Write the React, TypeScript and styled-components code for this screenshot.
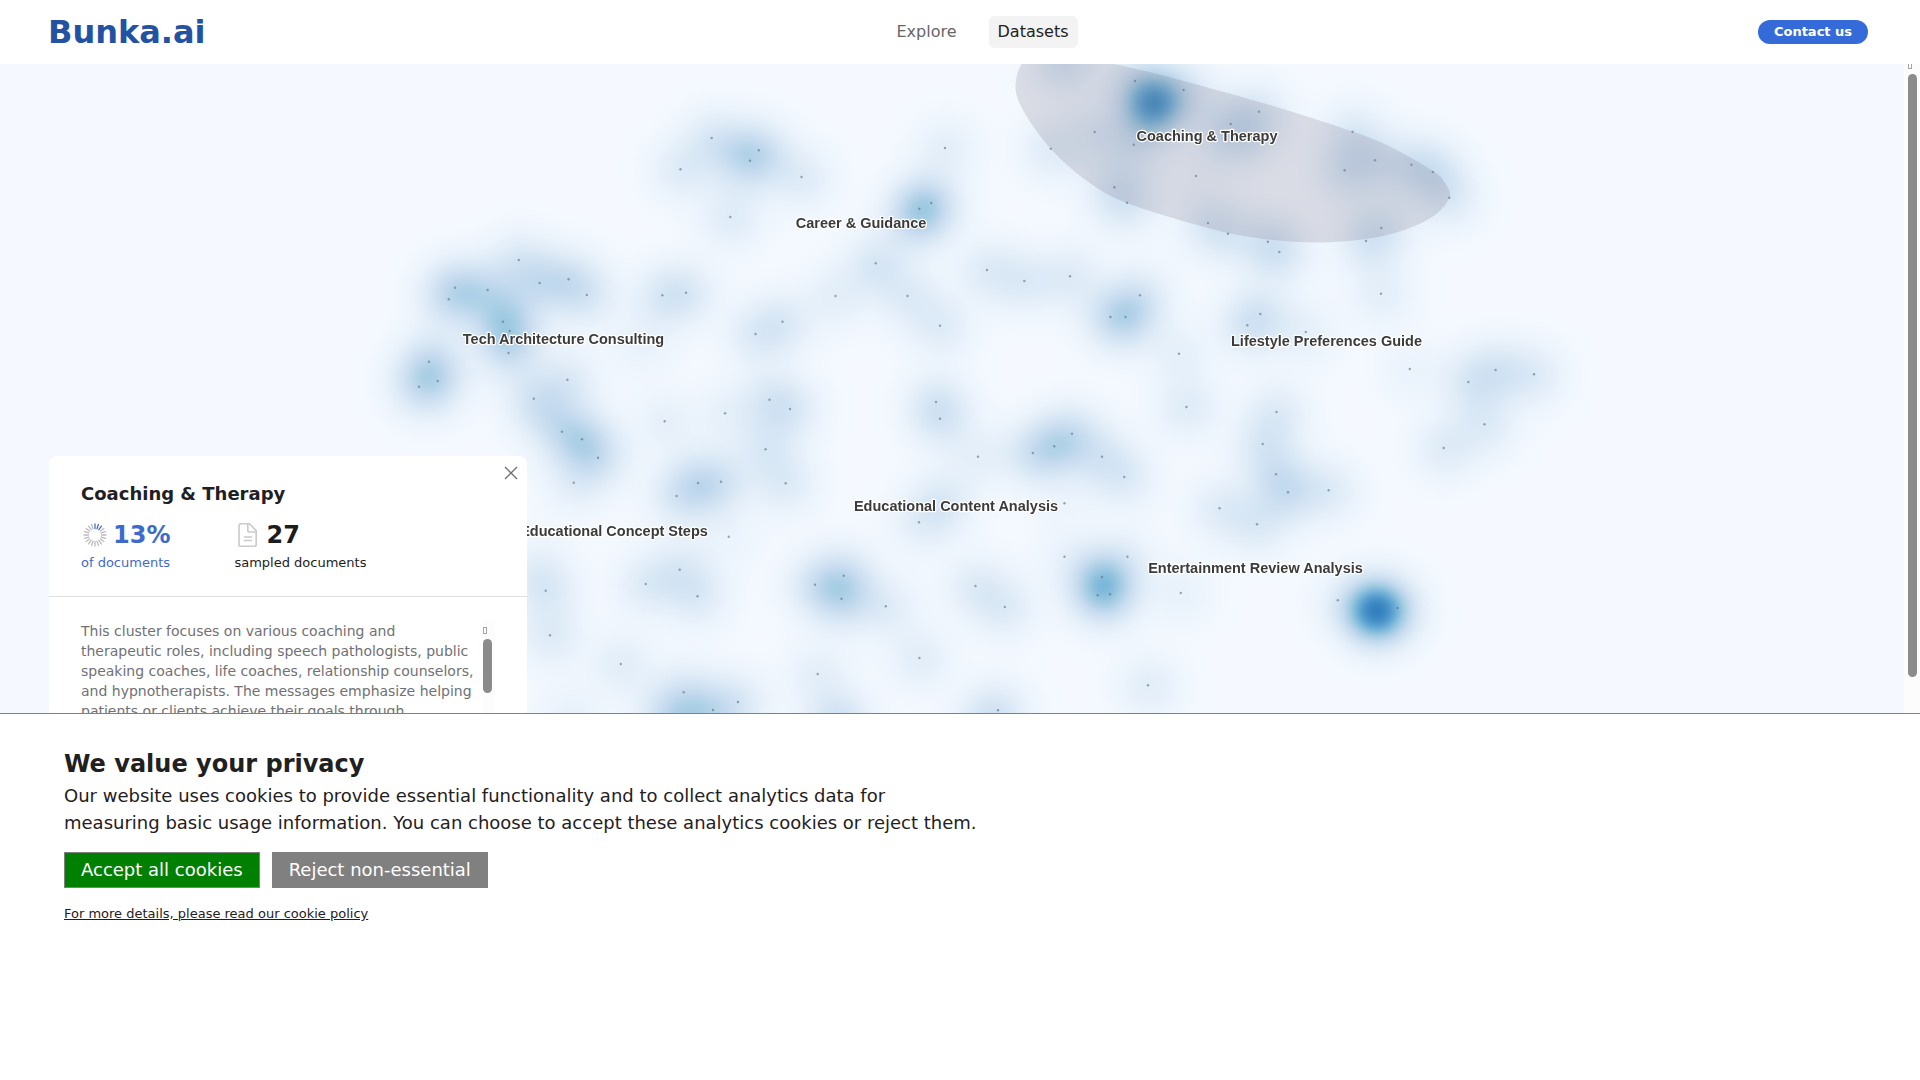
import React, { useLayoutEffect, useRef } from "react";
import styled, { createGlobalStyle } from "styled-components";

const GlobalStyle = createGlobalStyle`
  *, *::before, *::after { box-sizing: border-box; }
  body { margin: 0; background: #fff; }
  button { font: inherit; cursor: pointer; }
`;

const sans = `"DejaVu Sans", Verdana, sans-serif`;

const Page = styled.div`
  display: flex;
  flex-direction: column;
  height: 1080px;
  overflow: hidden;
  background: #fff;
  color: #1f2022;
  font-family: ${sans};
`;

const Header = styled.header`
  display: grid;
  grid-template-columns: 1fr auto 1fr;
  align-items: center;
  flex: none;
  height: 64px;
  padding: 0 52px 0 48px;
  background: #fff;
`;

const Logo = styled.div`
  color: #2352a2;
  font-size: 32px;
  font-weight: 700;
  line-height: 40px;
`;

const Nav = styled.nav`
  display: flex;
  gap: 23px;
  padding-left: 49px;
`;

const NavItem = styled.a<{ $active?: boolean }>`
  padding: 0 9px;
  border-radius: 6px;
  background: ${(p) => (p.$active ? "#f3f3f3" : "transparent")};
  color: ${(p) => (p.$active ? "#222" : "#666")};
  font-size: 16px;
  line-height: 32px;
`;

const Contact = styled.button`
  justify-self: end;
  height: 24px;
  width: 110px;
  padding: 0;
  border: 0;
  border-radius: 12px;
  background: #346bd8;
  color: #fff;
  font-size: 13px;
  font-weight: 700;
  line-height: 24px;
`;

const Viewport = styled.main`
  position: relative;
  display: flex;
  flex: none;
  height: 649px;
  overflow: hidden;
  background: #f5f9ff;
`;

const MapArea = styled.div`
  position: relative;
  flex: 1;
  overflow: hidden;
`;

const Density = styled.canvas`
  display: block;
  width: 1904px;
  height: 652px;
`;

const Overlay = styled.svg`
  position: absolute;
  inset: 0;
`;

const Label = styled.text`
  font: 700 14.5px "Liberation Sans", Arial, sans-serif;
  fill: #3b3b3b;
  stroke: #fff;
  stroke-width: 2.4px;
  stroke-linejoin: round;
  paint-order: stroke;
`;

const Track = styled.div<{ $wide?: boolean }>`
  flex: none;
  width: ${(p) => (p.$wide ? "16px" : "12px")};
  padding-left: ${(p) => (p.$wide ? "4px" : "0")};
  background: #fcfcfc;
`;

const TrackArrow = styled.div<{ $h: number; $top: number }>`
  height: ${(p) => p.$h}px;
  padding-top: ${(p) => p.$top}px;

  &::before {
    content: "";
    display: block;
    width: 4px;
    height: 7px;
    border: 1px solid #a5a5a5;
  }
`;

const OuterArrow = styled(TrackArrow)`
  &::before {
    height: 5px;
    border-top: 0;
  }
`;

const Thumb = styled.div<{ $h: number }>`
  width: 9px;
  height: ${(p) => p.$h}px;
  border-radius: 5px;
  background: #8b8b8b;
`;

const Card = styled.aside`
  position: absolute;
  left: 49px;
  top: 392px;
  width: 478px;
  border-radius: 8px;
  background: #fff;
`;

const Close = styled.button`
  position: absolute;
  top: 10px;
  right: 9px;
  width: 14px;
  height: 14px;
  padding: 0;
  border: 0;
  background: none;

  svg { display: block; }
`;

const CardHead = styled.div`
  height: 141px;
  padding: 25px 32px 0;
  border-bottom: 1px solid #dedfe1;
`;

const CardTitle = styled.h2`
  margin: 0;
  font-size: 18px;
  font-weight: 700;
  line-height: 25px;
`;

const Stats = styled.div`
  display: flex;
  gap: 64px;
  margin-top: 12px;
`;

const Stat = styled.div<{ $accent?: boolean }>`
  color: ${(p) => (p.$accent ? "#3e6bc9" : "#1c1c1e")};
  font-size: 13px;
  line-height: 20px;
`;

const StatValue = styled.div`
  display: flex;
  align-items: center;
  gap: 5px;
  height: 34px;
  padding-left: 1px;
  margin-bottom: 1px;
  font-size: 24px;
  font-weight: 700;
`;

const CardBody = styled.div`
  display: flex;
  gap: 8px;
  height: 120px;
  padding: 24px 31px 0 32px;
`;

const Description = styled.p`
  flex: none;
  width: 394px;
  margin: 0;
  color: #717174;
  font-size: 14px;
  line-height: 20px;
`;

const Banner = styled.section`
  flex: 1;
  padding: 33px 64px 0;
  border-top: 1px solid #7d8480;
  background: #fff;
`;

const BannerTitle = styled.h1`
  margin: 0;
  font-size: 24px;
  font-weight: 700;
  line-height: 34px;
`;

const BannerText = styled.p`
  margin: 0;
  font-size: 18px;
  line-height: 27px;
  padding-top: 1px;
`;

const Actions = styled.div`
  display: flex;
  gap: 12px;
  margin: 16px 0 15px;
`;

const Action = styled.button<{ $bg: string }>`
  height: 36px;
  padding: 0 16px;
  border: 1px solid #808080;
  background: ${(p) => p.$bg};
  color: #fff;
  font-size: 18px;
  line-height: 34px;
`;

const Policy = styled.a`
  font-size: 13px;
  line-height: 20px;
  text-decoration: underline;
`;

const BASE_Y = 64;

/* Document positions: x, y and optional weight in the density estimate. */
const docs: number[][] = [
  [711.7, 138], [758.8, 150.3, 1.3], [750, 160.7], [680.5, 169.3], [801.5, 177], [730.3, 217], [945, 148, 0.8],
  [931.2, 203, 1], [919.3, 208.7, 2.1], [875.8, 263.3, 1.3], [835.5, 296, 0.8], [907.5, 296], [940, 325.7],
  [782.5, 321.7], [755.6, 334], [662.3, 295.3], [686, 292.7], [518.8, 260], [455, 287.7, 1.5], [487.6, 290, 1.3],
  [448.8, 299.3], [539.7, 283, 1.3], [568.6, 279.3, 1.2], [586.8, 295], [503, 321.7, 1.6], [509.7, 331, 1.2],
  [508.5, 353], [429, 361.7, 1.5], [437.7, 381], [419, 386.7, 1.3], [567.4, 379.7], [533.8, 398.7],
  [725, 413.3, 0.6], [769.5, 399.7], [790, 409], [936, 402], [940, 418.7], [987, 270],
  [1183.6, 90], [1135, 81], [1259, 111.7], [1230.7, 124], [1352.5, 131.7], [1094.7, 132], [1050.8, 148.7],
  [1133.8, 144.7], [1375, 160.3], [1411.4, 164.7], [1432.8, 172, 1.2], [1344.6, 170.3, 1.2], [1449.3, 197.7],
  [1196, 176, 0.3], [1114.4, 187.3], [1127, 202.7], [1208, 223], [1228, 233.7, 0.8], [1267.9, 241.7],
  [1279.3, 252], [1381.3, 228], [1366, 241], [1381, 293.7, 0.8], [1024.3, 281], [1070, 276.3],
  [1140, 295.3], [1110.5, 317, 1], [1125.5, 317, 1.7], [1260.3, 314], [1247.3, 325.3], [1305.8, 332, 0.7],
  [1179, 353.7, 0.7], [1409.8, 369, 0.5], [1495.6, 370, 1.2], [1534, 374.3],
  [562, 431.7], [582, 439.3, 1.6], [598, 457.7, 1.2], [573.8, 482.7, 0.7], [664.7, 421.3, 0.7], [765.5, 449.3],
  [785.7, 483.3], [698, 483, 1.5], [721, 481.7], [676.6, 496], [728.8, 536.7, 0.4], [978, 456.7, 0.7],
  [1072, 433.7, 1.3], [1054.2, 446.3, 1.3], [1032.8, 453, 1.3], [1102, 456.7], [1124.2, 477],
  [1064.5, 503.3, 0.3], [919, 522.3, 0.7], [1064.5, 556.7, 0.4], [1127.4, 556.7, 0.5], [1102, 577, 2.3],
  [1097.7, 595.3, 1.3], [1110, 594.3], [679.7, 569.7], [645.7, 584], [697.5, 596.3], [545.7, 590.7, 0.9],
  [550, 635.3], [620.8, 664, 0.9], [815, 584.7, 1.2], [843.8, 575.7, 1.4], [841.5, 598.7, 1.5], [885.8, 606.3, 0.9],
  [975.5, 586], [1004.8, 607], [919.4, 658, 0.9], [817.7, 674, 0.8], [683.7, 692.3], [737.9, 702], [713, 710],
  [998, 710.3], [1186.4, 407], [1276.5, 412], [1262.7, 444], [1276, 474.3], [1288, 492.3, 1.3],
  [1328.7, 490.3], [1219.6, 508.3], [1257, 524.3], [1468.3, 382], [1484.5, 424.3], [1443.8, 448],
  [1180.8, 593, 0.6], [1148, 685.3, 0.9], [1337.8, 600.3, 0.4], [1397.5, 608, 0.6],
];

const hidden: number[][] = [
  [1153, 103, 4.8], [1150, 122, 0.3], [1375, 610, 6.1], [1063, 60, 1.7], [1220, 138, 0.6], [941, 503, 1.2],
  [641, 342, 0.6], [1248, 138, 0.8], [670, 718, 1.8], [702, 722, 1], [838, 722, 1.8], [985, 722, 1],
  [570, 718, 0.7], [538, 570, 0.7], [735, 155, 0.7], [545, 410, 0.7], [915, 222, 0.7],
];

const ramp = [
  [245, 249, 255], [222, 235, 247], [198, 219, 239], [158, 202, 225],
  [110, 175, 215], [70, 145, 200], [44, 116, 184], [8, 81, 156],
];

function DensityLayer() {
  const ref = useRef<HTMLCanvasElement>(null);
  useLayoutEffect(() => {
    const canvas = ref.current;
    const ctx = canvas?.getContext("2d");
    if (!canvas || !ctx) return;
    const { width, height } = canvas;
    const step = 2;
    const sigma = 22;
    const reach = 44;
    const field = new Float32Array(width * height);
    for (const [x, y, w = 1] of [...docs, ...hidden]) {
      const cx = x / step;
      const cy = (y - BASE_Y) / step;
      for (let j = Math.max(0, Math.floor(cy - reach)); j < Math.min(height, cy + reach); j++) {
        for (let i = Math.max(0, Math.floor(cx - reach)); i < Math.min(width, cx + reach); i++) {
          const d2 = ((i - cx) ** 2 + (j - cy) ** 2) * step * step;
          field[j * width + i] += w * Math.exp(-d2 / (2 * sigma * sigma));
        }
      }
    }
    const image = ctx.createImageData(width, height);
    field.forEach((v, k) => {
      const t = Math.min(6.99, v * 0.86);
      const a = Math.floor(t);
      const f = t - a;
      for (let c = 0; c < 3; c++) {
        image.data[k * 4 + c] = ramp[a][c] * (1 - f) + ramp[a + 1][c] * f;
      }
      image.data[k * 4 + 3] = 255;
    });
    ctx.putImageData(image, 0, 0);
  }, []);
  return <Density ref={ref} width={952} height={326} />;
}

const hull = [
  [1015.6, 85], [1023.5, 111], [1051, 149], [1087, 181], [1127, 203], [1208, 228], [1257, 238], [1314, 242.5],
  [1366, 239], [1407, 229], [1435, 215], [1449.5, 197], [1445, 183], [1433, 171], [1391, 147], [1352.5, 131.5],
  [1276.5, 107], [1183.6, 81], [1114, 64], [1060, 55], [1026, 60],
];

function smoothClosed(points: number[][]) {
  const n = points.length;
  const at = (i: number) => points[(i + n) % n];
  let d = `M${points[0].join(",")}`;
  for (let i = 0; i < n; i++) {
    const [p0, p1, p2, p3] = [at(i - 1), at(i), at(i + 1), at(i + 2)];
    d += `C${p1[0] + (p2[0] - p0[0]) / 6},${p1[1] + (p2[1] - p0[1]) / 6} ${p2[0] - (p3[0] - p1[0]) / 6},${
      p2[1] - (p3[1] - p1[1]) / 6
    } ${p2[0]},${p2[1]}`;
  }
  return d + "Z";
}

const labels: [string, number, number][] = [
  ["Career & Guidance", 861, 228],
  ["Coaching & Therapy", 1207, 141],
  ["Tech Architecture Consulting", 563.5, 344],
  ["Lifestyle Preferences Guide", 1326.5, 346],
  ["Educational Content Analysis", 956, 511],
  ["Educational Concept Steps", 614, 536],
  ["Entertainment Review Analysis", 1255.5, 573],
];

function ClusterMap() {
  return (
    <MapArea>
      <DensityLayer />
      <Overlay width="1904" height="649" viewBox="0 64 1904 649">
        {docs.map(([x, y], i) => (
          <circle key={i} cx={x} cy={y} r="1.2" fill="#5c6f80" fillOpacity=".6" />
        ))}
        <path d={smoothClosed(hull)} fill="rgba(122,108,128,.2)" />
        {labels.map(([name, x, y]) => (
          <Label key={name} x={x} y={y} textAnchor="middle">
            {name}
          </Label>
        ))}
      </Overlay>
    </MapArea>
  );
}

function ShareIcon() {
  return (
    <svg width="26" height="26" viewBox="-13 -13 26 26">
      {Array.from({ length: 20 }, (_, i) => (
        <line
          key={i}
          y1="-6.5"
          y2="-11"
          transform={`rotate(${i * 18})`}
          stroke={i < 3 ? "#4a6fc4" : "#bcbcbc"}
          strokeWidth="1.3"
          strokeLinecap="round"
        />
      ))}
    </svg>
  );
}

function DocumentIcon() {
  return (
    <svg width="26" height="26" viewBox="-0.5 0 26 26" fill="none" stroke="#cacaca" strokeWidth="1.6" strokeLinejoin="round" strokeLinecap="round">
      <path d="M14 1.8H5.3a1.8 1.8 0 0 0-1.8 1.8v18.8a1.8 1.8 0 0 0 1.8 1.8h13.6a1.8 1.8 0 0 0 1.8-1.8V8.6L14 1.8H12.3v6.4a1.8 1.8 0 0 0 1.8 1.8h6.4" />
      <path d="M8.8 15h7.2M8.8 18.5h7.2" />
    </svg>
  );
}

export default function App() {
  return (
    <Page>
      <GlobalStyle />
      <Header>
        <Logo>Bunka.ai</Logo>
        <Nav>
          <NavItem>Explore</NavItem>
          <NavItem $active>Datasets</NavItem>
        </Nav>
        <Contact>Contact us</Contact>
      </Header>
      <Viewport>
        <ClusterMap />
        <Track $wide>
          <OuterArrow $h={10} $top={0} />
          <Thumb $h={603} />
        </Track>
        <Card>
          <Close aria-label="Close">
            <svg width="14" height="14" viewBox="0 0 14 14" stroke="#707070" strokeWidth="1.4">
              <path d="M1 1l12 12M13 1L1 13" />
            </svg>
          </Close>
          <CardHead>
            <CardTitle>Coaching &amp; Therapy</CardTitle>
            <Stats>
              <Stat $accent>
                <StatValue>
                  <ShareIcon />
                  13%
                </StatValue>
                of documents
              </Stat>
              <Stat>
                <StatValue>
                  <DocumentIcon />
                  27
                </StatValue>
                sampled documents
              </Stat>
            </Stats>
          </CardHead>
          <CardBody>
            <Description>
              This cluster focuses on various coaching and therapeutic roles, including speech pathologists, public
              speaking coaches, life coaches, relationship counselors, and hypnotherapists. The messages emphasize
              helping patients or clients achieve their goals through
            </Description>
            <Track>
              <TrackArrow $h={18} $top={6} />
              <Thumb $h={54} />
            </Track>
          </CardBody>
        </Card>
      </Viewport>
      <Banner>
        <BannerTitle>We value your privacy</BannerTitle>
        <BannerText>
          Our website uses cookies to provide essential functionality and to collect analytics data for
          <br />
          measuring basic usage information. You can choose to accept these analytics cookies or reject them.
        </BannerText>
        <Actions>
          <Action $bg="#008000">Accept all cookies</Action>
          <Action $bg="#808080">Reject non-essential</Action>
        </Actions>
        <Policy>For more details, please read our cookie policy</Policy>
      </Banner>
    </Page>
  );
}
